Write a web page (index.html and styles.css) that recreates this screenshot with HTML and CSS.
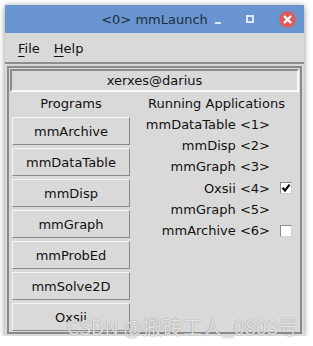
FILE: index.html
```html
<!DOCTYPE html>
<html lang="en">
<head>
    <meta charset="UTF-8">
    <meta name="viewport" content="width=device-width, initial-scale=1.0">
    <title>mmLaunch</title>
    <link rel="stylesheet" href="styles.css">
</head>
<body>
    <div class="window">
        <div class="titlebar">
            <span class="title">&lt;0&gt; mmLaunch</span>
            <div class="win-controls">
                <span class="ctl-min"></span>
                <span class="ctl-max"></span>
                <span class="ctl-close">
                    <svg width="17" height="17" viewBox="0 0 17 17">
                        <circle cx="8.5" cy="8.5" r="8.3" fill="#e05a5c"/>
                        <path d="M5.6 5.6 L11.4 11.4 M11.4 5.6 L5.6 11.4" stroke="#fff" stroke-width="2.2" stroke-linecap="round"/>
                    </svg>
                </span>
            </div>
        </div>

        <div class="menubar">
            <span class="menu"><u>F</u>ile</span>
            <span class="menu"><u>H</u>elp</span>
        </div>

        <div class="frame">
            <div class="account">xerxes@darius</div>
            <div class="columns">
                <div class="programs">
                    <div class="col-title">Programs</div>
                    <button class="prog-btn">mmArchive</button>
                    <button class="prog-btn">mmDataTable</button>
                    <button class="prog-btn">mmDisp</button>
                    <button class="prog-btn">mmGraph</button>
                    <button class="prog-btn">mmProbEd</button>
                    <button class="prog-btn">mmSolve2D</button>
                    <button class="prog-btn">Oxsii</button>
                </div>
                <div class="running">
                    <div class="col-title">Running Applications</div>
                    <div class="app-list">
                        <span class="app-name">mmDataTable &lt;1&gt;</span><span></span>
                        <span class="app-name">mmDisp &lt;2&gt;</span><span></span>
                        <span class="app-name">mmGraph &lt;3&gt;</span><span></span>
                        <span class="app-name">Oxsii &lt;4&gt;</span>
                        <span class="check">
                            <svg width="10" height="10" viewBox="0 0 10 10">
                                <path d="M1.5 4.8 L4 7.6 L8.6 1.6" fill="none" stroke="#000" stroke-width="2.2"/>
                            </svg>
                        </span>
                        <span class="app-name">mmGraph &lt;5&gt;</span><span></span>
                        <span class="app-name">mmArchive &lt;6&gt;</span><span class="check"></span>
                    </div>
                </div>
            </div>
        </div>
    </div>

    <div class="watermark">CSDN @搬砖工人_0803号</div>
</body>
</html>
```

FILE: styles.css
```css
* {
    margin: 0;
    padding: 0;
    box-sizing: border-box;
}

body {
    background: #ffffff;
    font-family: 'DejaVu Sans', sans-serif;
    font-size: 13px;
    color: #111;
    padding: 5px 0 0 5px;
}

.window {
    width: 299px;
    height: 331px;
    background: #d9d9d9;
    box-shadow: 0 1px 6px rgba(0, 0, 0, 0.45);
    overflow: hidden;
}

.titlebar {
    position: relative;
    height: 28px;
    background: #6895cf;
    display: flex;
    justify-content: center;
    align-items: center;
}

.title {
    color: #232c3a;
    font-size: 13px;
    padding-top: 1px;
}

.win-controls {
    position: absolute;
    top: 0;
    right: 8px;
    height: 28px;
    display: flex;
    align-items: center;
}

.ctl-min {
    width: 6px;
    height: 2px;
    background: #dde6f3;
    margin-top: 7px;
    margin-right: 25px;
}

.ctl-max {
    width: 8px;
    height: 8px;
    border: 2px solid #dde6f3;
    margin-right: 25px;
}

.ctl-close {
    display: flex;
}

.menubar {
    height: 31px;
    border-bottom: 2px solid #8c8c8c;
    display: flex;
    align-items: center;
    padding: 1px 0 0 8px;
}

.menu {
    padding: 0 5px;
    margin-right: 4px;
}

.menu u {
    text-underline-offset: 3px;
    text-decoration-thickness: 1px;
}

.frame {
    margin: 2px 2px 0 2px;
    height: 268px;
    border: 2px solid #8a8a8a;
    padding: 1px;
    overflow: hidden;
}

.account {
    height: 23px;
    border: 2px solid;
    border-color: #8a8a8a #fafafa #fafafa #8a8a8a;
    text-align: center;
    line-height: 19px;
}

.columns {
    display: flex;
    gap: 5px;
    padding-left: 2px;
}

.programs {
    width: 118px;
    display: flex;
    flex-direction: column;
}

.programs .col-title {
    margin-bottom: 3px;
}

.col-title {
    height: 22px;
    padding-top: 3px;
    line-height: 18px;
    text-align: center;
}

.prog-btn {
    height: 28px;
    margin-bottom: 3px;
    background: #d9d9d9;
    border: 1px solid;
    border-color: #f4f4f4 #8a8a8a #8a8a8a #f4f4f4;
    font-family: 'DejaVu Sans', sans-serif;
    font-size: 13px;
    color: #111;
    flex-shrink: 0;
}

.running {
    width: 163px;
}

.app-list {
    display: grid;
    grid-template-columns: 1fr 12px;
    grid-auto-rows: 21.2px;
    column-gap: 10px;
    align-items: center;
    padding-right: 6px;
}

.app-name {
    text-align: right;
}

.check {
    width: 12px;
    height: 12px;
    background: #fff;
    border: 1px solid;
    border-color: #8a8a8a #d0d0d0 #d0d0d0 #8a8a8a;
    display: flex;
    align-items: center;
    justify-content: center;
}

.watermark {
    position: absolute;
    top: 312px;
    right: 15px;
    font-family: 'Noto Sans CJK SC', sans-serif;
    font-size: 20px;
    color: rgba(255, 255, 255, 0.8);
    text-shadow: 0 0 1px rgba(80, 80, 80, 0.8);
    white-space: nowrap;
}
```
